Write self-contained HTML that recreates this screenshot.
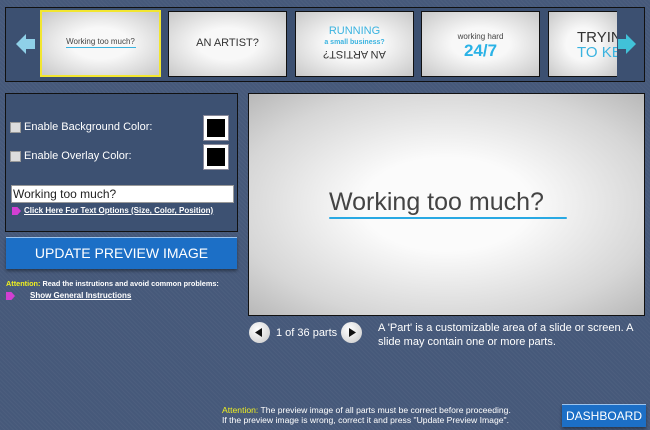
<!DOCTYPE html>
<html><head><style>
body{margin:0;width:650px;height:430px;overflow:hidden;background:#46597a;font-family:"Liberation Sans",Arial,sans-serif;position:relative;
background-image:repeating-linear-gradient(45deg,rgba(255,255,255,0.03) 0 1px,transparent 1px 3px);}
.a{position:absolute}
.strip{left:5px;top:7px;width:638px;height:73px;border:1px solid #111;background:#3c5071}
.th{position:absolute;top:3px;height:64px;width:117px;border:1px solid #111;background:radial-gradient(ellipse at center,#f8f8f8 35%,#c8c8c8 100%);overflow:hidden;text-align:center}
.panel{left:5px;top:93px;width:231px;height:137px;border:1px solid #111;background:#3d5172}
.lbl{color:#fff;font-size:11px}
.cb{width:9px;height:9px;background:#ddd;border:1px solid #999}
.sw{width:18px;height:18px;background:#000;border:3px solid #fff;box-shadow:0 0 0 1px #889}
.btn{background:#1c6fc6;color:#fff;text-align:center;border-top:1px solid #9cc4ee;box-shadow:0 2px 3px rgba(0,0,0,.4)}
.pk{width:9px;height:8px;background:#d23fd3;clip-path:polygon(0 0,60% 0,100% 50%,60% 100%,0 100%)}
.circ{width:21px;height:21px;border-radius:50%;background:radial-gradient(circle at 40% 35%,#fff,#c8c8c8);}
</style></head><body>
<div class="a strip">
 <svg class="a" style="left:10px;top:26px" width="20" height="20"><polygon points="0,10 10,0 10,5 19,5 19,15 10,15 10,20" fill="#8fd0e8"/></svg>
 <div class="th" style="left:34px;width:117px;height:63px;top:2px;border:2px solid #f2e630"><div style="margin-top:25px;font-size:8px;color:#444">Working too much?</div><div style="margin:1px auto;width:70px;height:1px;background:#3ab3e0"></div></div>
 <div class="th" style="left:162px"><div style="margin-top:25px;font-size:11px;color:#333">AN ARTIST?</div></div>
 <div class="th" style="left:289px"><div style="margin-top:14px;font-size:11px;color:#3ab3e0;line-height:10px">RUNNING<br><span style="font-size:7px;font-weight:bold">a small business?</span></div><div style="font-size:11px;color:#333;transform:rotate(180deg)">AN ARTIST?</div></div>
 <div class="th" style="left:415px"><div style="margin-top:20px;font-size:8px;color:#444">working hard</div><div style="font-size:17px;color:#2ab2e6;font-weight:bold">24/7</div></div>
 <div class="th" style="left:542px;width:68px;border-right:none"><div style="margin-top:18px;font-size:15px;color:#333;text-align:left;padding-left:28px;line-height:15px;white-space:nowrap">TRYIN<br><span style="color:#3ab3e0">TO KE</span></div></div>
 <svg class="a" style="left:612px;top:26px" width="18" height="20"><polygon points="18,10 8,0 8,5 0,5 0,15 8,15 8,20" fill="#41c2d8"/></svg>
</div>

<div class="a panel">
 <div class="a cb" style="left:4px;top:28px"></div><div class="a lbl" style="left:18px;top:27px">Enable Background Color:</div>
 <div class="a sw" style="left:198px;top:22px"></div>
 <div class="a cb" style="left:4px;top:57px"></div><div class="a lbl" style="left:18px;top:56px">Enable Overlay Color:</div>
 <div class="a sw" style="left:198px;top:51px"></div>
 <div class="a" style="left:5px;top:91px;width:220px;height:16px;background:#fff;border:1px solid #999;font-size:12px;line-height:16px;padding-left:1px;color:#222">Working too much?</div>
 <div class="a pk" style="left:6px;top:113px"></div>
 <div class="a" style="left:18px;top:112px;color:#fff;font-size:8px;font-weight:bold;text-decoration:underline">Click Here For Text Options (Size, Color, Position)</div>
</div>
<div class="a btn" style="left:6px;top:237px;width:231px;height:31px;line-height:31px;font-size:14px">UPDATE PREVIEW IMAGE</div>
<div class="a" style="left:6px;top:279px;font-size:7.3px;color:#fff;font-weight:bold"><span style="color:#f0f020">Attention:</span> Read the instrutions and avoid common problems:</div>
<div class="a pk" style="left:6px;top:292px"></div>
<div class="a" style="left:30px;top:291px;font-size:8px;color:#fff;font-weight:bold;text-decoration:underline">Show General Instructions</div>

<div class="a" style="left:248px;top:93px;width:395px;height:221px;border:1px solid #111;background:radial-gradient(ellipse at center,#fbfbfb 30%,#d6d6d6 75%,#b8b8b8 100%)">
 <div class="a" style="left:80px;top:94px;font-size:25px;color:#444">Working too much?</div>
 <div class="a" style="left:80px;top:123px;width:238px;height:2px;background:#29a9e3;border-radius:1px"></div>
</div>
<div class="a circ" style="left:249px;top:322px"></div><svg class="a" style="left:255px;top:328px" width="8" height="9"><polygon points="7,0 7,9 0,4.5" fill="#111"/></svg>
<div class="a" style="left:276px;top:327px;font-size:11px;color:#fff">1 of 36 parts</div>
<div class="a circ" style="left:341px;top:322px"></div><svg class="a" style="left:349px;top:328px" width="8" height="9"><polygon points="0,0 0,9 7,4.5" fill="#111"/></svg>
<div class="a" style="left:378px;top:321px;width:270px;font-size:11px;color:#fff;line-height:14px">A 'Part' is a customizable area of a slide or screen. A slide may contain one or more parts.</div>

<div class="a" style="left:222px;top:405px;font-size:8.6px;color:#fff;line-height:10px"><span style="color:#f0f020">Attention:</span> The preview image of all parts must be correct before proceeding.<br>If the preview image is wrong, correct it and press "Update Preview Image".</div>
<div class="a btn" style="left:562px;top:404px;width:84px;height:22px;line-height:22px;font-size:12px">DASHBOARD</div>
</body></html>
